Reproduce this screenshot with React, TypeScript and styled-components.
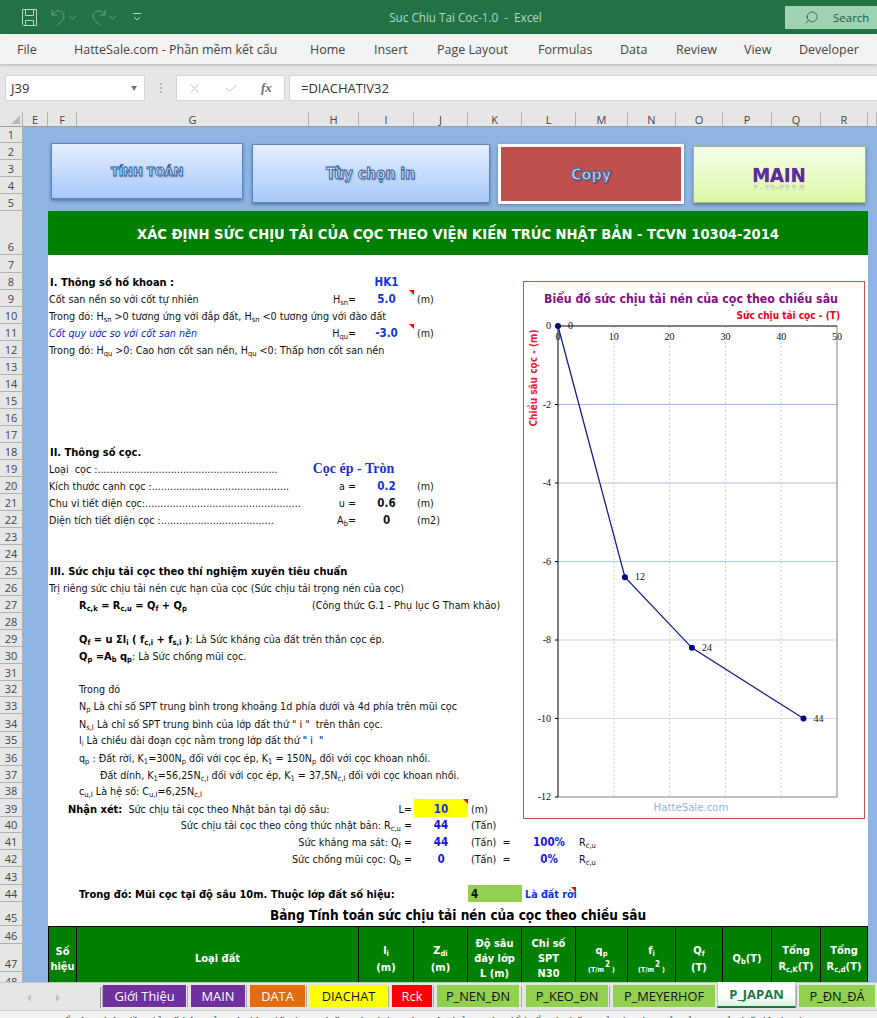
import React from "react";
import styled, { createGlobalStyle } from "styled-components";
import { X, Check, Search } from "lucide-react";

const Global = createGlobalStyle`
  html, body { margin: 0; padding: 0; background: #fff; overflow: hidden; }
  #root { width: 877px; height: 1018px; }
  * { box-sizing: border-box; }
`;

const UI = `"Open Sans", "Noto Sans", sans-serif`;
const BODY = `"DejaVu Sans Condensed", "DejaVu Sans", sans-serif`;
const SERIF = `"Liberation Serif", serif`;
const BLUE = "#8db4e2";
const INK_BLUE = "#0b36d8";

const Window = styled.div`
  width: 877px;
  height: 1018px;
  display: flex;
  flex-direction: column;
  overflow: hidden;
  font-family: ${BODY};
`;

/* ---------- title bar ---------- */
const TitleBar = styled.header`
  height: 34px;
  flex: none;
  background: #217346;
  display: flex;
  align-items: center;
  position: relative;
  padding-left: 21px;
`;
const QuickIcon = styled.svg<{ $ml?: number }>`
  margin-left: ${(p) => p.$ml ?? 0}px;
  flex: none;
  display: block;
`;
const WindowTitle = styled.div`
  position: absolute;
  left: 0;
  width: 931px;
  text-align: center;
  font: 11.7px ${UI};
  color: #b9d6c6;
`;
const SearchBox = styled.div`
  margin-left: auto;
  width: 92px;
  height: 23px;
  background: #9fd1b3;
  display: flex;
  align-items: center;
  gap: 14px;
  padding-left: 19px;
  font: 11.5px ${UI};
  color: #1d5c3a;
`;
const SearchGlyph = styled(Search)`
  transform: scaleX(-1);
`;

/* ---------- ribbon ---------- */
const Ribbon = styled.nav`
  height: 30px;
  flex: none;
  background: #f3f3f3;
  display: flex;
  align-items: center;
  padding-left: 17px;
  box-shadow: 0 1px 3px rgba(0, 0, 0, 0.22);
  position: relative;
  z-index: 1;
`;
const RibbonItem = styled.span<{ $w: number; $gap: number }>`
  width: ${(p) => p.$w}px;
  margin-right: ${(p) => p.$gap}px;
  flex: none;
  white-space: nowrap;
  font: 12.5px ${UI};
  color: #444;
`;

/* ---------- formula bar ---------- */
const FormulaArea = styled.div`
  height: 48px;
  flex: none;
  background: #e6e6e6;
  display: flex;
  align-items: flex-start;
  padding: 11px 0 0 5px;
`;
const NameBox = styled.div`
  width: 140px;
  height: 26px;
  background: #fff;
  border: 1px solid #d4d4d4;
  display: flex;
  align-items: center;
  justify-content: space-between;
  padding: 0 7px 0 5px;
  font: 13px ${UI};
  color: #333;
`;
const Caret = styled.span`
  width: 0;
  height: 0;
  border-left: 3.5px solid transparent;
  border-right: 3.5px solid transparent;
  border-top: 5px solid #777;
`;
const Grip = styled.div`
  width: 31px;
  height: 26px;
  flex: none;
  display: flex;
  flex-direction: column;
  align-items: center;
  justify-content: center;
  gap: 2px;
  i {
    width: 2px;
    height: 2px;
    background: #b5b5b5;
    display: block;
  }
`;
const FxBox = styled.div`
  width: 109px;
  height: 26px;
  background: #fff;
  border: 1px solid #d4d4d4;
  display: flex;
  align-items: center;
  gap: 22px;
  padding-left: 10px;
  color: #b8b8b8;
`;
const FxGlyph = styled.span`
  font: italic bold 13px ${SERIF};
  color: #6f6f6f;
`;
const FormulaInput = styled.div`
  flex: 1;
  height: 26px;
  margin-left: 4px;
  background: #fff;
  border: 1px solid #d4d4d4;
  border-right: none;
  display: flex;
  align-items: center;
  padding-left: 11px;
  font: 13px ${UI};
  color: #333;
`;

/* ---------- sheet ---------- */
const bottoms = [
  143, 160, 177, 194, 211, 255, 273, 290, 307, 324, 341, 358, 375, 392, 409, 426, 443, 460, 477, 494, 511, 528, 545,
  562, 579, 596, 613, 630, 647, 664, 681, 697, 714, 732, 748, 766, 783, 799, 817, 833, 850, 867, 885, 902, 926, 944,
  972, 990,
];
const rowHeights = bottoms.map((b, i) => b - (i === 0 ? 127 : bottoms[i - 1]));
const colWidths = [23, 25, 29, 232, 50, 55, 54, 54, 54, 52, 48, 47, 49, 49, 47, 9];
const colNames = ["E", "F", "G", "H", "I", "J", "K", "L", "M", "N", "O", "P", "Q", "R", ""];

const SheetViewport = styled.div`
  flex: 1;
  min-height: 0;
  position: relative;
  overflow: hidden;
  background: #fff;
`;
const SheetGrid = styled.div`
  display: grid;
  grid-template-columns: ${colWidths.map((w) => `${w}px`).join(" ")};
  grid-template-rows: 15px ${rowHeights.map((h) => `${h}px`).join(" ")};
`;
const Corner = styled.div`
  grid-column: 1;
  grid-row: 1;
  background: #e6e6e6;
  border-right: 1px solid #b1b1b1;
  border-bottom: 1px solid #9f9f9f;
  position: relative;
  &::after {
    content: "";
    position: absolute;
    right: 2px;
    bottom: 2px;
    border-left: 9px solid transparent;
    border-bottom: 9px solid #b9b9b9;
  }
`;
const ColHead = styled.div<{ $col: number }>`
  grid-column: ${(p) => p.$col};
  grid-row: 1;
  background: #e6e6e6;
  border-right: 1px solid #b1b1b1;
  border-bottom: 1px solid #9f9f9f;
  display: flex;
  align-items: center;
  justify-content: center;
  font: 11px ${UI};
  color: #444;
`;
const RowHead = styled.div<{ $row: number }>`
  grid-column: 1;
  grid-row: ${(p) => p.$row + 1};
  background: #e6e6e6;
  border-right: 1px solid #b1b1b1;
  border-bottom: 1px solid #b1b1b1;
  display: flex;
  align-items: flex-end;
  justify-content: center;
  font: 11px/15px ${UI};
  color: #444;
`;
const BlueBand = styled.div`
  grid-column: 2 / -1;
  grid-row: 2 / span 5;
  background: ${BLUE};
  border-bottom: 1px solid #9db3cc;
`;
const BlueSide = styled.div<{ $col: number }>`
  grid-column: ${(p) => p.$col};
  grid-row: 7 / span 43;
  background: ${BLUE};
`;
const TitleStrip = styled.h1`
  grid-column: 3 / span 13;
  grid-row: 7;
  margin: 0;
  background: #008000;
  color: #fff;
  display: flex;
  align-items: center;
  justify-content: center;
  font: bold 14.6px ${BODY};
`;

type Place = { $col: number; $row: number; $span?: number };
const Cell = styled.div<Place>`
  grid-column: ${(p) => p.$col} / span ${(p) => p.$span ?? 1};
  grid-row: ${(p) => p.$row + 1};
  position: relative;
  display: flex;
  align-items: flex-end;
  white-space: nowrap;
  font: 10.7px/15px ${BODY};
  color: #111;
  min-width: 0;
`;
const Note = styled(Cell)<{ $pad?: number; $accent?: boolean }>`
  padding-left: ${(p) => p.$pad ?? 1}px;
  font-style: ${(p) => (p.$accent ? "italic" : "normal")};
  color: ${(p) => (p.$accent ? "#0b1fd0" : "#111")};
  display: block;
  align-self: end;
`;
const Section = styled(Note)`
  font-weight: bold;
  font-size: 11px;
  color: #000;
`;
const Formula = styled(Note)`
  b {
    font-weight: bold;
    font-size: 11px;
    color: #000;
  }
`;
const Symbol = styled(Cell)<{ $pr?: number }>`
  justify-content: flex-end;
  padding-right: ${(p) => p.$pr ?? 3}px;
`;
const Value = styled(Cell)<{ $tone?: string; $fill?: string }>`
  justify-content: center;
  font-weight: bold;
  font-size: 11.5px;
  color: ${(p) => p.$tone ?? INK_BLUE};
  background: ${(p) => p.$fill ?? "transparent"};
`;
const LayerCode = styled(Value)`
  justify-content: flex-start;
  padding-left: 3px;
`;
const Unit = styled(Cell)`
  padding-left: 3px;
  display: block;
  align-self: end;
`;
const Flag = styled.i`
  position: absolute;
  top: 0;
  right: 0;
  border-top: 5px solid #ff0000;
  border-left: 5px solid transparent;
`;
const BlueNote = styled(Note)`
  font-weight: bold;
  color: ${INK_BLUE};
`;
const PileType = styled(Cell)`
  justify-content: center;
  margin-left: -16px;
  font: bold 14px/17px ${SERIF};
  color: #1a2fd0;
`;
const Small = styled.sub`
  font-size: 7.5px;
  line-height: 0;
  vertical-align: -2px;
  font-weight: inherit;
`;
const TableTitle = styled(Cell)`
  justify-content: center;
  font-weight: bold;
  font-size: 13.5px;
  line-height: 18px;
  color: #000;
  padding-bottom: 2px;
`;
const TableHead = styled.div<{ $col: number; $span?: number; $first?: boolean; $gap?: number }>`
  grid-column: ${(p) => p.$col} / span ${(p) => p.$span ?? 1};
  grid-row: 47 / span 3;
  background: #008000;
  border-top: 1px solid #000;
  border-right: 1px solid #000;
  border-left: ${(p) => (p.$first ? "1px solid #000" : "none")};
  display: flex;
  flex-direction: column;
  align-items: center;
  justify-content: center;
  gap: ${(p) => p.$gap ?? 0}px;
  text-align: center;
  font: bold 11px/15px ${BODY};
  color: #fff;
`;
const TinyUnit = styled.span`
  font-size: 7px;
  line-height: 9px;
  margin-top: 7px;
  sup {
    font-size: 8px;
    line-height: 0;
    vertical-align: 5px;
    margin-left: 1px;
    margin-right: 2px;
  }
`;

/* ---------- floating shapes ---------- */
const ButtonLayer = styled.div`
  position: absolute;
  left: 51px;
  top: 31px;
  display: flex;
  align-items: flex-start;
  gap: 8.5px;
`;
const Shape = styled.button<{ $w: number; $h: number; $mt?: number }>`
  width: ${(p) => p.$w}px;
  height: ${(p) => p.$h}px;
  margin-top: ${(p) => p.$mt ?? 0}px;
  padding: 0;
  flex: none;
  display: flex;
  align-items: center;
  justify-content: center;
  border: 1.5px solid #5a86bd;
  background: linear-gradient(#e4eeff, #a9c9fa);
  box-shadow: 0 2px 3px rgba(30, 50, 90, 0.45);
  font-family: ${BODY};
  font-weight: bold;
`;
const OutlineText = styled.span<{ $size: number }>`
  font-size: ${(p) => p.$size}px;
  color: #c2d8f3;
  -webkit-text-stroke: 0.8px #2a5a9a;
  text-shadow: 1px 1px 2px rgba(40, 60, 110, 0.45);
`;
const CopyShape = styled(Shape)`
  border: 3px solid #fff;
  background: #c0504d;
  box-shadow: 0 1px 3px rgba(30, 50, 90, 0.4);
`;
const MainShape = styled(Shape)`
  border: 1.5px solid #a3bd6a;
  background: linear-gradient(#f6ffea, #dcf9a7);
  box-shadow: 0 2px 3px rgba(40, 60, 60, 0.45);
`;
const MainText = styled.span`
  font-size: 20px;
  color: #5e2d9c;
  text-shadow: 0 0 1px #5e2d9c;
  -webkit-box-reflect: below -7px linear-gradient(transparent 55%, rgba(255, 255, 255, 0.45));
`;

const ChartBox = styled.figure`
  position: absolute;
  left: 523px;
  top: 169px;
  width: 342px;
  height: 538px;
  margin: 0;
  background: #fff;
  border: 1px solid #c0504d;
`;
const ChartSvg = styled.svg`
  display: block;
`;

/* ---------- tabs ---------- */
const TabBar = styled.div`
  height: 28px;
  flex: none;
  background: #e6e6e6;
  border-top: 1px solid #c4c4c4;
  display: flex;
  align-items: flex-start;
  position: relative;
  z-index: 1;
`;
const TabNav = styled.div`
  width: 103px;
  height: 25px;
  margin-top: 2px;
  flex: none;
  display: flex;
  align-items: center;
  padding-left: 27px;
  gap: 25px;
  position: relative;
  &::after {
    content: "";
    position: absolute;
    right: 2px;
    top: 2px;
    height: 21px;
    width: 1px;
    background: #9a9a9a;
  }
`;
const NavArrow = styled.span<{ $dir: "l" | "r" }>`
  width: 0;
  height: 0;
  border-top: 4px solid transparent;
  border-bottom: 4px solid transparent;
  ${(p) => (p.$dir === "l" ? "border-right: 4px solid #c2c2c2;" : "border-left: 4px solid #c2c2c2;")}
`;
const Tab = styled.div<{ $w: number; $bg: string; $fg: string; $ml: number }>`
  width: ${(p) => p.$w}px;
  height: 22px;
  margin-top: 2px;
  margin-left: ${(p) => p.$ml}px;
  flex: none;
  background: ${(p) => p.$bg};
  color: ${(p) => p.$fg};
  display: flex;
  align-items: center;
  justify-content: center;
  font: 12.8px ${UI};
  white-space: nowrap;
  position: relative;
  &::before {
    content: "";
    position: absolute;
    left: ${(p) => -Math.ceil(p.$ml / 2) - 1}px;
    top: 1px;
    height: 21px;
    width: 1px;
    background: #a8a8a8;
  }
`;
const ActiveTab = styled.div<{ $w: number; $ml: number }>`
  width: ${(p) => p.$w}px;
  height: 26px;
  margin-left: ${(p) => p.$ml}px;
  margin-top: -1px;
  flex: none;
  background: linear-gradient(#fff 55%, #dcefe0);
  border-bottom: 2px solid #217346;
  border-left: 1px solid #c4c4c4;
  border-right: 1px solid #c4c4c4;
  color: #217346;
  display: flex;
  align-items: center;
  justify-content: center;
  font: bold 13px ${UI};
`;
const StatusBar = styled.footer`
  height: 8px;
  flex: none;
  background: #f3f3f3;
  border-top: 1px solid #cfcfcf;
  overflow: hidden;
  padding: 4px 0 0 55px;
  font: 12px/16px ${UI};
  color: #444;
  white-space: nowrap;
`;

/* ---------- chart drawing ---------- */
const PLOT = { l: 34, r: 313, t: 44, b: 515 };
const xPos = (v: number) => PLOT.l + (v / 50) * (PLOT.r - PLOT.l);
const yPos = (v: number) => PLOT.t + (-v / 12) * (PLOT.b - PLOT.t);
const data: [number, number][] = [
  [0, 0],
  [12, -6.4],
  [24, -8.2],
  [44, -10],
];
const hColors = ["#9dbceb", "#a3c0ec", "#b3caef", "#c0d3f0", "#cfdeee"];

function PileChart() {
  return (
    <ChartSvg width="340" height="536" viewBox="0 0 340 536">
      <text x="167" y="21" textAnchor="middle" fontFamily={BODY} fontWeight="bold" fontSize="12.25" fill="#7f0f86">
        Biểu đồ sức chịu tải nén của cọc theo chiều sâu
      </text>
      <text x="316" y="37" textAnchor="end" fontFamily={BODY} fontWeight="bold" fontSize="10" fill="#f00020">
        Sức chịu tải cọc - (T)
      </text>
      <text
        transform="translate(13 96) rotate(-90)"
        textAnchor="middle"
        fontFamily={BODY}
        fontWeight="bold"
        fontSize="10"
        fill="#ea2030"
      >
        Chiều sâu cọc - (m)
      </text>
      {[10, 20, 30, 40].map((v) => (
        <line key={v} x1={xPos(v)} x2={xPos(v)} y1={PLOT.t} y2={PLOT.b} stroke="#c0d4f2" strokeDasharray="2 2" />
      ))}
      {[-2, -4, -6, -8, -10].map((v, i) => (
        <line key={v} x1={PLOT.l} x2={PLOT.r} y1={yPos(v)} y2={yPos(v)} stroke={hColors[i]} />
      ))}
      <line x1={PLOT.r} x2={PLOT.r} y1={PLOT.t} y2={PLOT.b} stroke="#808080" />
      <line x1={PLOT.l} x2={PLOT.r} y1={PLOT.b} y2={PLOT.b} stroke="#808080" />
      <line x1={PLOT.l} x2={PLOT.r} y1={PLOT.t} y2={PLOT.t} stroke="#000" />
      <line x1={PLOT.l} x2={PLOT.l} y1={PLOT.t} y2={PLOT.b} stroke="#000" />
      {[0, -2, -4, -6, -8, -10, -12].map((v) => (
        <g key={v}>
          <line x1={PLOT.l - 3} x2={PLOT.l} y1={yPos(v)} y2={yPos(v)} stroke="#000" />
          <text x={PLOT.l - 7} y={yPos(v) + 3} textAnchor="end" fontFamily={SERIF} fontSize="10" fill="#111">
            {v}
          </text>
        </g>
      ))}
      {[0, 10, 20, 30, 40, 50].map((v) => (
        <text key={v} x={xPos(v)} y={PLOT.t + 14} textAnchor="middle" fontFamily={SERIF} fontSize="10" fill="#111">
          {v}
        </text>
      ))}
      <polyline
        points={data.map(([x, y]) => `${xPos(x)},${yPos(y)}`).join(" ")}
        fill="none"
        stroke="#1c1c8c"
        strokeWidth="1.3"
      />
      {data.map(([x, y]) => (
        <g key={x}>
          <circle cx={xPos(x)} cy={yPos(y)} r="3" fill="#000080" />
          <text x={xPos(x) + 10} y={yPos(y) + 3} fontFamily={SERIF} fontSize="10" fill="#111">
            {x}
          </text>
        </g>
      ))}
      <text x="167" y="529" textAnchor="middle" fontFamily={BODY} fontSize="11.3" fill="#8db4e2">
        HatteSale.com
      </text>
    </ChartSvg>
  );
}

/* ---------- data ---------- */
const ribbonItems: [string, number, number][] = [
  ["File", 18, 39],
  ["HatteSale.com - Phần mềm kết cấu", 202, 34],
  ["Home", 35, 29],
  ["Insert", 32, 31],
  ["Page Layout", 71, 30],
  ["Formulas", 53, 29],
  ["Data", 27, 29],
  ["Review", 40, 28],
  ["View", 27, 28],
  ["Developer", 60, 0],
];
const tabs: [string, number, string, string, number][] = [
  ["Giới Thiệu", 83, "#7030a0", "#fff", 0],
  ["MAIN", 54, "#7030a0", "#fff", 5],
  ["DATA", 55, "#e36c0a", "#fff", 5],
  ["DIACHAT", 77, "#ffff00", "#111", 5],
  ["Rck", 40, "#ff0000", "#fff", 5],
  ["P_NEN_ĐN", 82, "#92d050", "#111", 5],
  ["P_KEO_ĐN", 82, "#92d050", "#111", 7],
  ["P_MEYERHOF", 102, "#92d050", "#111", 5],
];

export default function App() {
  return (
    <Window>
      <Global />
      <TitleBar>
        <QuickIcon width="17" height="17" viewBox="0 0 17 17" fill="none" stroke="#b9d6c6" strokeWidth="1">
          <path d="M1.5 .5h14v16h-13l-1-1z M4.5 .5v6h8v-6 M4.5 16.5v-5h8v5" />
        </QuickIcon>
        <QuickIcon $ml={13} width="15" height="17" viewBox="0 0 15 17" fill="none" stroke="#6fa68a" strokeWidth="1">
          <path d="M1 1v5h5 M1 6c2-3 4-4 6-4 4 0 6 3 6 5 0 3-3 6-7 9" />
        </QuickIcon>
        <QuickIcon $ml={3} width="7" height="5" viewBox="0 0 7 5" fill="none" stroke="#6fa68a">
          <path d="M.5 1l3 3 3-3" />
        </QuickIcon>
        <QuickIcon $ml={15} width="15" height="17" viewBox="0 0 15 17" fill="none" stroke="#6fa68a" strokeWidth="1">
          <path d="M14 1v5H9 M14 6c-2-3-4-4-6-4-4 0-6 3-6 5 0 3 3 6 7 9" />
        </QuickIcon>
        <QuickIcon $ml={3} width="7" height="5" viewBox="0 0 7 5" fill="none" stroke="#6fa68a">
          <path d="M.5 1l3 3 3-3" />
        </QuickIcon>
        <QuickIcon $ml={17} width="8" height="8" viewBox="0 0 8 8" fill="none" stroke="#b9d6c6">
          <path d="M0 .5h8 M1 4l3 3 3-3" />
        </QuickIcon>
        <WindowTitle>Suc Chiu Tai Coc-1.0&nbsp; -&nbsp; Excel</WindowTitle>
        <SearchBox>
          <SearchGlyph size={15} strokeWidth={1.3} />
          Search
        </SearchBox>
      </TitleBar>

      <Ribbon>
        {ribbonItems.map(([t, w, g]) => (
          <RibbonItem key={t} $w={w} $gap={g}>
            {t}
          </RibbonItem>
        ))}
      </Ribbon>

      <FormulaArea>
        <NameBox>
          J39
          <Caret />
        </NameBox>
        <Grip>
          <i />
          <i />
          <i />
        </Grip>
        <FxBox>
          <X size={15} strokeWidth={1.4} />
          <Check size={15} strokeWidth={1.4} />
          <FxGlyph>fx</FxGlyph>
        </FxBox>
        <FormulaInput>=DIACHAT!V32</FormulaInput>
      </FormulaArea>

      <SheetViewport>
        <SheetGrid>
          <Corner />
          {colNames.map((c, i) => (
            <ColHead key={i} $col={i + 2}>
              {c}
            </ColHead>
          ))}
          {rowHeights.map((_, i) => (
            <RowHead key={i} $row={i + 1}>
              {i + 1}
            </RowHead>
          ))}
          <BlueBand />
          <BlueSide $col={2} />
          <BlueSide $col={16} />
          <TitleStrip>XÁC ĐỊNH SỨC CHỊU TẢI CỦA CỌC THEO VIỆN KIẾN TRÚC NHẬT BẢN - TCVN 10304-2014</TitleStrip>

          <Section $col={3} $row={8} $pad={2}>
            I. Thông số hố khoan :
          </Section>
          <Value $col={6} $row={8}>
            HK1
          </Value>
          <Note $col={3} $row={9}>
            Cốt san nền so với cốt tự nhiên
          </Note>
          <Symbol $col={5} $row={9}>
            <span>
              H<Small>sn</Small>=
            </span>
          </Symbol>
          <Value $col={6} $row={9}>
            5.0
            <Flag />
          </Value>
          <Unit $col={7} $row={9}>
            (m)
          </Unit>
          <Note $col={3} $row={10}>
            Trong đó: H<Small>sn</Small> &gt;0 tương ứng với đắp đất, H<Small>sn</Small> &lt;0 tương ứng với đào đất
          </Note>
          <Note $col={3} $row={11} $accent>
            Cốt quy ước so với cốt san nền
          </Note>
          <Symbol $col={5} $row={11}>
            <span>
              H<Small>qu</Small>=
            </span>
          </Symbol>
          <Value $col={6} $row={11}>
            -3.0
            <Flag />
          </Value>
          <Unit $col={7} $row={11}>
            (m)
          </Unit>
          <Note $col={3} $row={12}>
            Trong đó: H<Small>qu</Small> &gt;0: Cao hơn cốt san nền, H<Small>qu</Small> &lt;0: Thấp hơn cốt san nền
          </Note>

          <Section $col={3} $row={18} $pad={2}>
            II. Thông số cọc.
          </Section>
          <Note $col={3} $row={19}>
            Loại&nbsp; cọc :...........................................................
          </Note>
          <PileType $col={5} $row={19} $span={2}>
            Cọc ép - Tròn
          </PileType>
          <Note $col={3} $row={20}>
            Kích thước cạnh cọc :.............................................
          </Note>
          <Symbol $col={5} $row={20}>
            a =
          </Symbol>
          <Value $col={6} $row={20}>
            0.2
          </Value>
          <Unit $col={7} $row={20}>
            (m)
          </Unit>
          <Note $col={3} $row={21}>
            Chu vi tiết diện cọc:...................................................
          </Note>
          <Symbol $col={5} $row={21}>
            u =
          </Symbol>
          <Value $col={6} $row={21} $tone="#111">
            0.6
          </Value>
          <Unit $col={7} $row={21}>
            (m)
          </Unit>
          <Note $col={3} $row={22}>
            Diện tích tiết diện cọc :.....................................
          </Note>
          <Symbol $col={5} $row={22}>
            <span>
              A<Small>b</Small>=
            </span>
          </Symbol>
          <Value $col={6} $row={22} $tone="#111">
            0
          </Value>
          <Unit $col={7} $row={22}>
            (m2)
          </Unit>

          <Section $col={3} $row={25} $pad={2}>
            III. Sức chịu tải cọc theo thí nghiệm xuyên tiêu chuẩn
          </Section>
          <Note $col={3} $row={26}>
            Trị riêng sức chịu tải nén cực hạn của cọc (Sức chịu tải trọng nén của cọc)
          </Note>
          <Section $col={4} $row={27} $pad={2}>
            R<Small>c,k</Small> = R<Small>c,u</Small> = Q<Small>f</Small> + Q<Small>p</Small>
          </Section>
          <Note $col={5} $row={27} $pad={3}>
            (Công thức G.1 - Phụ lục G Tham khảo)
          </Note>
          <Formula $col={4} $row={29} $pad={2}>
            <b>
              Q<Small>f</Small> = u Σl<Small>i</Small> ( f<Small>c,i</Small> + f<Small>s,i</Small> )
            </b>
            : Là Sức kháng của đất trên thân cọc ép.
          </Formula>
          <Formula $col={4} $row={30} $pad={2}>
            <b>
              Q<Small>p</Small> =A<Small>b</Small> q<Small>p</Small>
            </b>
            : Là Sức chống mũi cọc.
          </Formula>
          <Note $col={4} $row={32} $pad={2}>
            Trong đó
          </Note>
          <Note $col={4} $row={33} $pad={2}>
            N<Small>p</Small> Là chỉ số SPT trung bình trong khoảng 1d phía dưới và 4d phía trên mũi cọc
          </Note>
          <Note $col={4} $row={34} $pad={2}>
            N<Small>s,I</Small> Là chỉ số SPT trung bình của lớp đất thứ " i " &nbsp;trên thân cọc.
          </Note>
          <Note $col={4} $row={35} $pad={2}>
            l<Small>i</Small> Là chiều dài đoạn cọc nằm trong lớp đất thứ " i &nbsp;"
          </Note>
          <Note $col={4} $row={36} $pad={2}>
            q<Small>p</Small> : Đất rời, K<Small>1</Small>=300N<Small>p</Small> đối với cọc ép, K<Small>1</Small> = 150N
            <Small>p</Small> đối với cọc khoan nhồi.
          </Note>
          <Note $col={4} $row={37} $pad={23}>
            Đất dính, K<Small>1</Small>=56,25N<Small>c,I</Small> đối với cọc ép, K<Small>1</Small> = 37,5N
            <Small>c,I</Small> đối với cọc khoan nhồi.
          </Note>
          <Note $col={4} $row={38} $pad={2}>
            c<Small>u,I</Small> Là hệ số: C<Small>u,I</Small>=6,25N<Small>c,I</Small>
          </Note>

          <Formula $col={3} $row={39} $pad={20}>
            <b>Nhận xét:</b>&nbsp; Sức chịu tải cọc theo Nhật bản tại độ sâu:
          </Formula>
          <Symbol $col={6} $row={39} $pr={2}>
            L=
          </Symbol>
          <Value $col={7} $row={39} $fill="#ffff00">
            10
            <Flag />
          </Value>
          <Unit $col={8} $row={39}>
            (m)
          </Unit>
          <Symbol $col={3} $row={40} $span={4} $pr={2}>
            <span>
              Sức chịu tải cọc theo công thức nhật bản: R<Small>c,u</Small> =
            </span>
          </Symbol>
          <Value $col={7} $row={40} $tone="#1414e6">
            44
          </Value>
          <Unit $col={8} $row={40}>
            (Tấn)
          </Unit>
          <Symbol $col={3} $row={41} $span={4} $pr={2}>
            <span>
              Sức kháng ma sát: Q<Small>f</Small> =
            </span>
          </Symbol>
          <Value $col={7} $row={41} $tone="#1414e6">
            44
          </Value>
          <Unit $col={8} $row={41}>
            (Tấn)&nbsp; =
          </Unit>
          <Value $col={9} $row={41} $tone="#1414e6">
            100%
          </Value>
          <Unit $col={10} $row={41}>
            R<Small>c,u</Small>
          </Unit>
          <Symbol $col={3} $row={42} $span={4} $pr={2}>
            <span>
              Sức chống mũi cọc: Q<Small>b</Small> =
            </span>
          </Symbol>
          <Value $col={7} $row={42} $tone="#1414e6">
            0
          </Value>
          <Unit $col={8} $row={42}>
            (Tấn)&nbsp; =
          </Unit>
          <Value $col={9} $row={42} $tone="#1414e6">
            0%
          </Value>
          <Unit $col={10} $row={42}>
            R<Small>c,u</Small>
          </Unit>

          <Section $col={4} $row={44} $pad={2}>
            Trong đó: Mũi cọc tại độ sâu 10m. Thuộc lớp đất số hiệu:
          </Section>
          <LayerCode $col={8} $row={44} $fill="#92d050" $tone="#111">
            4
          </LayerCode>
          <BlueNote $col={9} $row={44} $pad={3}>
            Là đất rời
            <Flag />
          </BlueNote>

          <TableTitle $col={3} $row={45} $span={13}>
            Bảng Tính toán sức chịu tải nén của cọc theo chiều sâu
          </TableTitle>

          <TableHead $col={3} $first>
            <span>Số</span>
            <span>hiệu</span>
          </TableHead>
          <TableHead $col={4} $span={2}>
            Loại đất
          </TableHead>
          <TableHead $col={6} $gap={2}>
            <span>
              l<Small>i</Small>
            </span>
            <span>(m)</span>
          </TableHead>
          <TableHead $col={7} $gap={2}>
            <span>
              Z<Small>di</Small>
            </span>
            <span>(m)</span>
          </TableHead>
          <TableHead $col={8}>
            <span>Độ sâu</span>
            <span>đáy lớp</span>
            <span>L (m)</span>
          </TableHead>
          <TableHead $col={9}>
            <span>Chỉ số</span>
            <span>SPT</span>
            <span>N30</span>
          </TableHead>
          <TableHead $col={10}>
            <span>
              q<Small>p</Small>
            </span>
            <TinyUnit>
              (T/m
              <sup>2</sup>)
            </TinyUnit>
          </TableHead>
          <TableHead $col={11}>
            <span>
              f<Small>i</Small>
            </span>
            <TinyUnit>
              (T/m
              <sup>2</sup>)
            </TinyUnit>
          </TableHead>
          <TableHead $col={12} $gap={2}>
            <span>
              Q<Small>f</Small>
            </span>
            <span>(T)</span>
          </TableHead>
          <TableHead $col={13}>
            <span>
              Q<Small>b</Small>(T)
            </span>
          </TableHead>
          <TableHead $col={14} $gap={1}>
            <span>Tổng</span>
            <span>
              R<Small>c,K</Small>(T)
            </span>
          </TableHead>
          <TableHead $col={15} $gap={1}>
            <span>Tổng</span>
            <span>
              R<Small>c,d</Small>(T)
            </span>
          </TableHead>
        </SheetGrid>

        <ButtonLayer>
          <Shape $w={192} $h={56}>
            <OutlineText $size={13}>TÍNH TOÁN</OutlineText>
          </Shape>
          <Shape $w={238} $h={59} $mt={1}>
            <OutlineText $size={15.5}>Tùy chọn in</OutlineText>
          </Shape>
          <CopyShape $w={186} $h={60} $mt={1}>
            <OutlineText $size={16}>Copy</OutlineText>
          </CopyShape>
          <MainShape $w={173} $h={57} $mt={3}>
            <MainText>MAIN</MainText>
          </MainShape>
        </ButtonLayer>

        <ChartBox>
          <PileChart />
        </ChartBox>
      </SheetViewport>

      <TabBar>
        <TabNav>
          <NavArrow $dir="l" />
          <NavArrow $dir="r" />
        </TabNav>
        {tabs.map(([t, w, bg, fg, ml]) => (
          <Tab key={t} $w={w} $bg={bg} $fg={fg} $ml={ml}>
            {t}
          </Tab>
        ))}
        <ActiveTab $w={79} $ml={2}>
          P_JAPAN
        </ActiveTab>
        <Tab $w={76} $bg="#92d050" $fg="#111" $ml={3}>
          P_ĐN_ĐÁ
        </Tab>
      </TabBar>
      <StatusBar>
        Để cập nhật đầy đủ số liệu của các lớp đất, hãy nhấn nút tính toán trên bảng này để hiển thị kết quả sức chịu tải của cọc ở chế độ đã chọn.
      </StatusBar>
    </Window>
  );
}
